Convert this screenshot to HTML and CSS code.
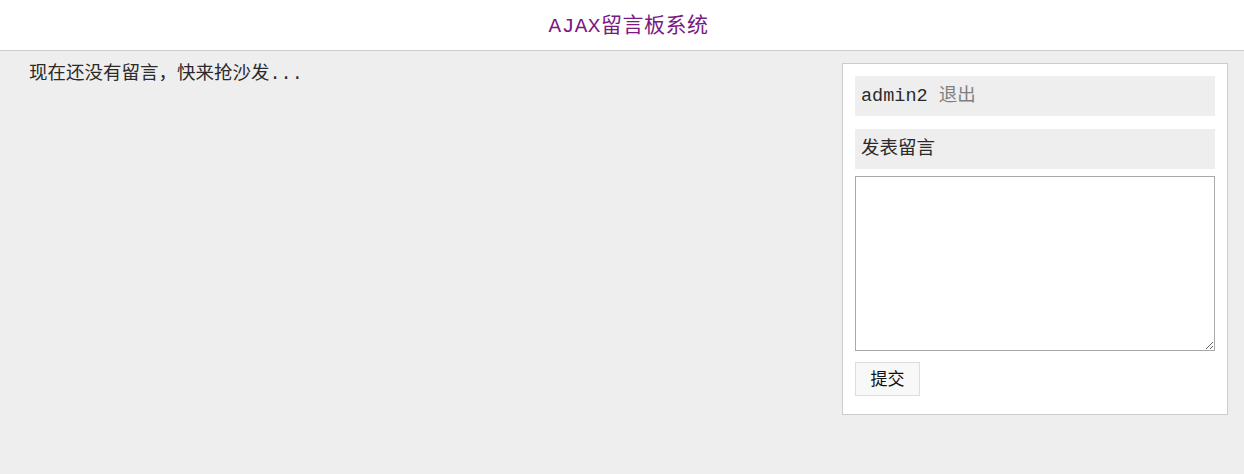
FILE: index.html
```html
<!DOCTYPE html>
<html lang="zh-CN">
<head>
<meta charset="utf-8">
<title>AJAX留言板系统</title>
<link rel="stylesheet" href="styles.css">
</head>
<body>
<header class="header">
  <h1 class="title">AJAX留言板系统</h1>
</header>
<main class="main">
  <section class="messages">
    <p class="empty">现在还没有留言，快来抢沙发...</p>
  </section>
  <aside class="panel">
    <div class="bar user-bar"><span class="user">admin2</span> <a class="logout" href="#">退出</a></div>
    <div class="bar">发表留言</div>
    <textarea class="content"></textarea>
    <div class="actions"><button class="submit" type="button">提交</button></div>
  </aside>
</main>
</body>
</html>
```

FILE: styles.css
```css
html, body {
  margin: 0;
  padding: 0;
}
body {
  background: #eeeeee;
  font-family: "Liberation Mono", "Noto Sans CJK SC", monospace;
  color: #2a2a2a;
  font-size: 18.5px;
}
.header {
  box-sizing: border-box;
  background: #fff;
  height: 51px;
  padding-top: 3px;
  border-bottom: 1px solid #cccccc;
  display: flex;
  align-items: center;
  justify-content: center;
}
.title {
  margin: 0 0 0 13px;
  font-family: "Liberation Mono", "Noto Sans CJK SC", monospace;
  font-size: 21px;
  font-weight: normal;
  color: #7a1a84;
  line-height: 26px;
  letter-spacing: 0.5px;
}
.main {
  display: flex;
  justify-content: space-between;
  align-items: flex-start;
  padding: 12px 16px 0 29px;
}
.messages {
  flex: 1;
}
.empty {
  margin: 0;
  line-height: 24px;
}
.panel {
  width: 360px;
  padding: 12px 12px 18px;
  background: #fff;
  border: 1px solid #cccccc;
  display: flex;
  flex-direction: column;
}
.bar {
  background: #eeeeee;
  height: 40px;
  line-height: 41px;
  padding: 0 6px;
}
.user-bar {
  margin-bottom: 13px;
}
.logout {
  color: #808080;
  text-decoration: none;
}
.content {
  margin-top: 7px;
  box-sizing: border-box;
  width: 360px;
  height: 175px;
  border: 1px solid #a9a9a9;
  padding: 2px;
  font-family: "Liberation Mono", "Noto Sans CJK SC", monospace;
  font-size: 14px;
  background: #fff;
}
.actions {
  margin-top: 11px;
}
.submit {
  width: 65px;
  height: 34px;
  background: #f8f8f8;
  border: 1px solid #dddddd;
  font-family: "Noto Sans CJK SC", sans-serif;
  font-size: 17px;
  line-height: 20px;
  color: #111;
  padding: 0 0 3px;
  cursor: pointer;
}
```
